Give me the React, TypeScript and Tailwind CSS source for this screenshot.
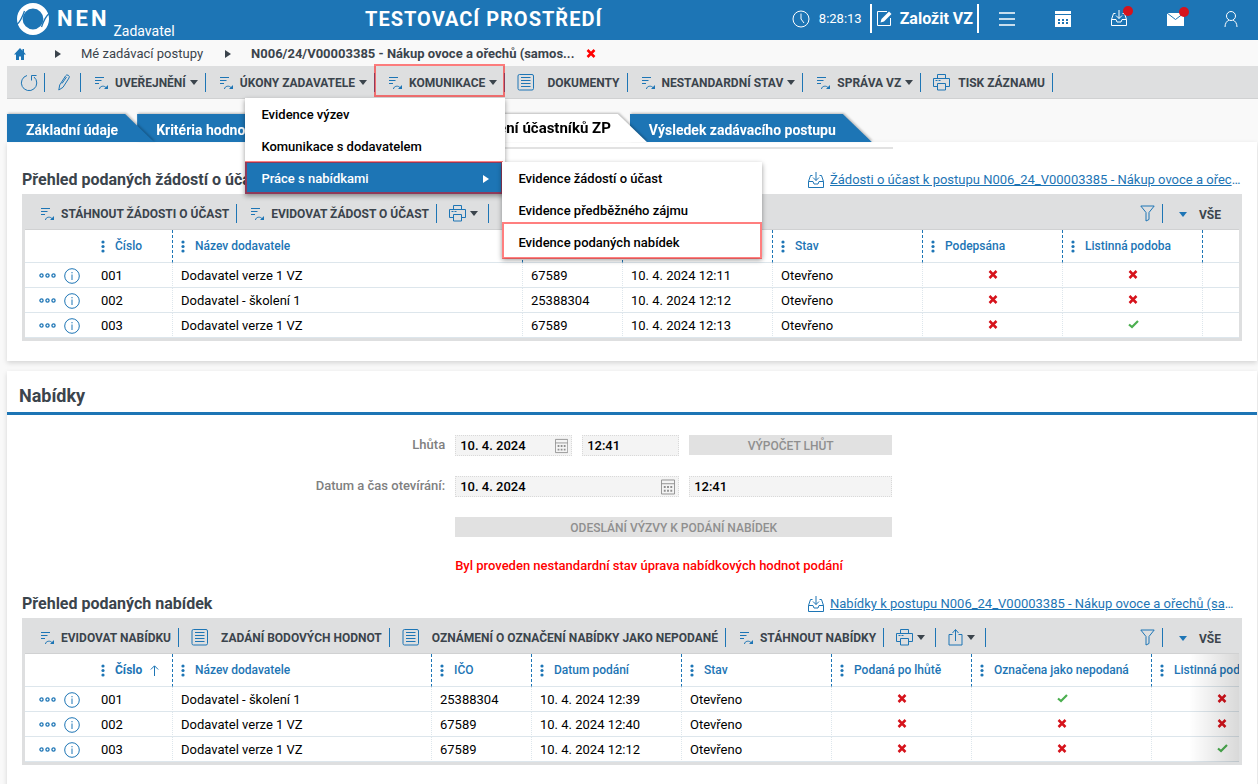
import type { ReactNode } from "react";
import clsx from "clsx";

interface IconProps {
  className?: string;
}

const LogoIcon = () => (
  <svg width="32" height="32" viewBox="0 0 32 32" fill="none">
    <circle cx="16" cy="16" r="13.200" stroke="#fff" strokeWidth="5.600" />
    <path d="M33 10C29 12 27 17 24.500 24" stroke="#1d75b5" strokeWidth="1.300" />
    <path d="M-1 22C3 20 5 15 7.500 8" stroke="#1d75b5" strokeWidth="1.300" />
  </svg>
);

const ClockIcon = () => (
  <svg width="18" height="18" viewBox="0 0 18 18" fill="none" stroke="#fff">
    <circle cx="9" cy="9" r="8" />
    <path d="M9 3.500V9l3 4" />
  </svg>
);

const ComposeIcon = () => (
  <svg width="17" height="17" viewBox="0 0 17 17" fill="none">
    <path d="M11 1.500H1.500v14h13V8" stroke="#fff" />
    <path d="M4.500 12.500l1-3.500 7.500-7.500 2.500 2.500L8 11.500z" fill="#fff" />
  </svg>
);

const CalendarSolidIcon = () => (
  <svg width="16" height="16" viewBox="0 0 16 16">
    <path d="M0 0h16v3H0zM0 4h16v12H0z" fill="#fff" />
    <path
      d="M3 8h2v2H3zM7 8h2v2H7zM11 8h2v2h-2zM3 11h2v2H3zM7 11h2v2H7zM11 11h2v2h-2z"
      fill="#1d75b5"
    />
  </svg>
);

const InboxIcon = ({ className }: IconProps) => (
  <svg
    width="17"
    height="17"
    viewBox="0 0 17 17"
    fill="none"
    stroke="currentColor"
    className={className}
  >
    <path d="M4.500 3.500H2.500L.5 9.500V15.500h15V9.500l-2-6h-2M.5 9.500h4.500l1 2.500h4l1-2.500h4.500" />
    <path d="M8 0v8.500M5 5.500l3 3 3-3" />
  </svg>
);

const MailIcon = () => (
  <svg width="17" height="14" viewBox="0 0 17 14">
    <path d="M0 1h17v13H0z" fill="#fff" />
    <path d="M0 1l8.500 6.500L17 1" fill="none" stroke="#1d75b5" />
  </svg>
);

const UserIcon = () => (
  <svg width="14" height="16" viewBox="0 0 14 16" fill="none" stroke="#fff">
    <circle cx="7" cy="5" r="4.500" />
    <path d="M1 16c0-4 2-6 4-7M13 16c0-4-2-6-4-7" />
  </svg>
);

const HomeIcon = () => (
  <svg width="12" height="12" viewBox="0 0 12 12" fill="#1d75b5">
    <path d="M6 0L0 6.500h2V12h3V8.500h2V12h3V6.500h2L10 4.300V1H8.500v1.700z" />
  </svg>
);

const RefreshIcon = () => (
  <svg width="18" height="18" viewBox="0 0 18 18" fill="none" stroke="#1d75b5">
    <path d="M7 1.500A7.700 7.700 0 1 0 14 3M11.500 6.500V1.500h5" />
  </svg>
);

const PencilIcon = () => (
  <svg width="12" height="17" viewBox="0 0 12 17" fill="none" stroke="#1d75b5">
    <path d="M.8 16l.9-5L7.500 2a2 2 0 0 1 3.500 2L5 13.300zM4 9.500L8.500 3" />
  </svg>
);

const ActionIcon = () => (
  <svg width="14" height="14" viewBox="0 0 14 14" fill="none" stroke="#1d75b5">
    <path d="M0 1.500h9M0 4.500h6.500M0 7.500h4M4.500 13c0-3 5-4 7-1" />
    <path d="M13 9v4h-4z" fill="#1d75b5" stroke="none" />
  </svg>
);

const DocumentIcon = () => (
  <svg width="18" height="17" viewBox="0 0 18 17" fill="none" stroke="#1d75b5">
    <rect x="1" y=".5" width="15.500" height="15.500" rx="1.500" />
    <path d="M4 3.500h9.500M4 6.500h9.500M4 9.500h9.500M4 12.500h9.500" />
  </svg>
);

const PrinterIcon = () => (
  <svg width="17" height="17" viewBox="0 0 17 17" fill="none" stroke="#1d75b5">
    <path d="M4.500 4.500v-4h8v4M4.500 12.500h-4v-8h16v8h-4M4.500 9.500h8v6.500h-8z" />
    <path d="M2.500 6.500h2M5.500 6.500h2" />
  </svg>
);

const ShareIcon = () => (
  <svg width="15" height="17" viewBox="0 0 15 17" fill="none" stroke="#1d75b5">
    <path d="M4.500 5.500H1v10.500h13V5.500h-3.500M7.500 12V1M4.500 4l3-3.500 3 3.500" />
  </svg>
);

const FilterIcon = () => (
  <svg width="15" height="17" viewBox="0 0 15 17" fill="none" stroke="#1d75b5">
    <path d="M.8 1h13.400L9 7.500v7l-3 1.500V7.500z" />
  </svg>
);

const CalendarIcon = () => (
  <svg width="15" height="16" viewBox="0 0 15 16" fill="none">
    <path d="M.5.5h14v15H.5zM.5 4.500h14" stroke="#8f8f8f" />
    <path
      d="M3 7h2v2H3zM6.500 7h2v2h-2zM10 7h2v2h-2zM3 11h2v2H3zM6.500 11h2v2h-2zM10 11h2v2h-2z"
      fill="#8f8f8f"
    />
  </svg>
);

const DotsIcon = () => (
  <svg
    width="17"
    height="5"
    viewBox="0 0 17 5"
    fill="none"
    stroke="#1d75b5"
    strokeWidth="1.300"
  >
    <circle cx="2.500" cy="2.500" r="1.600" />
    <circle cx="8.500" cy="2.500" r="1.600" />
    <circle cx="14.500" cy="2.500" r="1.600" />
  </svg>
);

const InfoIcon = () => (
  <svg width="16" height="16" viewBox="0 0 16 16" fill="none" stroke="#1d75b5">
    <circle cx="8" cy="8" r="7.300" />
    <path d="M8 6.500V12M8 4v1.300" />
  </svg>
);

const GripIcon = () => (
  <svg width="4" height="13" viewBox="0 0 4 13" fill="#1d75b5">
    <circle cx="2" cy="2" r="1.600" />
    <circle cx="2" cy="6.500" r="1.600" />
    <circle cx="2" cy="11" r="1.600" />
  </svg>
);

const SortIcon = () => (
  <svg width="9" height="11" viewBox="0 0 9 11" fill="none" stroke="#1d75b5">
    <path d="M4.500 11V1M.8 4.500l3.700-3.700 3.700 3.700" />
  </svg>
);

const CrossIcon = ({ className }: IconProps) => (
  <svg
    width="10"
    height="9"
    viewBox="0 0 10 9"
    fill="none"
    stroke="currentColor"
    strokeWidth="2.500"
    className={className}
  >
    <path d="M1.500 1l7 7M8.500 1l-7 7" />
  </svg>
);

const CheckIcon = () => (
  <svg width="11" height="9" viewBox="0 0 11 9" fill="none" className="inline">
    <path d="M1 4.500l3 2.500 6-6" stroke="#4caf50" strokeWidth="2.200" />
  </svg>
);

const Caret = ({ className }: IconProps) => (
  <svg
    width="8"
    height="5"
    viewBox="0 0 8 5"
    fill="currentColor"
    className={className}
  >
    <path d="M0 0h8L4 5z" />
  </svg>
);

const CaretRight = () => (
  <svg width="6" height="8" viewBox="0 0 6 8" fill="currentColor">
    <path d="M0 0l6 4-6 4z" />
  </svg>
);

const Separator = () => <span className="h-[19px] w-px shrink-0 bg-[#1d75b5]" />;

interface ToolButtonProps {
  label: string;
  icon?: "action" | "document" | "printer";
  caret?: boolean;
}

const ToolButton = ({ label, icon = "action", caret }: ToolButtonProps) => (
  <>
    <button
      type="button"
      className={clsx(
        "flex items-center pr-[7px] text-xs font-bold whitespace-nowrap text-[#3b444c]",
        icon === "action" ? "pl-[14px]" : "pl-3"
      )}
    >
      {icon === "action" && <ActionIcon />}
      {icon === "document" && <DocumentIcon />}
      {icon === "printer" && <PrinterIcon />}
      <span
        className={clsx(
          icon === "action" && "ml-[6px]",
          icon === "document" && "ml-3",
          icon === "printer" && "ml-2"
        )}
      >
        {label}
      </span>
      {caret && <Caret className="ml-1" />}
    </button>
    <Separator />
  </>
);

const IconMenuButton = ({
  label,
  children,
}: {
  label: string;
  children: ReactNode;
}) => (
  <>
    <button
      type="button"
      aria-label={label}
      className="flex items-center gap-1 pr-[10px] pl-3 text-[#3b444c]"
    >
      {children}
      <Caret />
    </button>
    <Separator />
  </>
);

const TopBar = () => (
  <header className="-mr-px flex h-10 items-center bg-[#1d75b5] text-white">
    <div className="flex w-[365px] shrink-0 items-center self-stretch pb-[3px] pl-[17px]">
      <LogoIcon />
      <span className="ml-2 text-[22px] font-bold tracking-[3px]">NEN</span>
      <span className="ml-1 self-end text-sm leading-3">Zadavatel</span>
    </div>
    <h1 className="pb-[3px] text-xl font-bold tracking-[1px] whitespace-nowrap">
      TESTOVACÍ PROSTŘEDÍ
    </h1>
    <div className="ml-auto flex shrink-0 items-center self-stretch pb-[3px]">
      <ClockIcon />
      <span className="mr-2 ml-[9px] text-[13px]">8:28:13</span>
      <button
        type="button"
        className="flex h-[29px] items-center gap-[7px] border-x-2 border-white px-1 text-base font-bold"
      >
        <ComposeIcon />
        Založit VZ
      </button>
      <button type="button" aria-label="Menu" className="grid w-14 place-items-center">
        <svg width="16" height="14" viewBox="0 0 16 14" stroke="#fff" strokeWidth="1.500">
          <path d="M0 1h16M0 7h16M0 13h16" />
        </svg>
      </button>
      <button type="button" aria-label="Kalendář" className="grid w-14 place-items-center">
        <CalendarSolidIcon />
      </button>
      <button type="button" aria-label="Doručené" className="relative grid w-14 place-items-center">
        <InboxIcon />
        <span className="absolute -top-1 right-[14px] size-[10px] rounded-full bg-[#d6131c]" />
      </button>
      <button type="button" aria-label="Zprávy" className="relative grid w-14 place-items-center">
        <MailIcon />
        <span className="absolute -top-[5px] right-[14px] size-[10px] rounded-full bg-[#d6131c]" />
      </button>
      <button type="button" aria-label="Uživatel" className="grid w-14 place-items-center">
        <UserIcon />
      </button>
    </div>
  </header>
);

const Breadcrumb = () => (
  <nav className="flex h-[26px] items-center pt-px pl-[14px] text-[13px] text-[#3b444c]">
    <a href="#" aria-label="Domů">
      <HomeIcon />
    </a>
    <span className="mr-5 ml-[29px]">
      <CaretRight />
    </span>
    <a href="#">Mé zadávací postupy</a>
    <span className="mr-5 ml-[22px]">
      <CaretRight />
    </span>
    <span className="font-bold">
      N006/24/V00003385 - Nákup ovoce a ořechů (samos...
    </span>
    <button type="button" aria-label="Zavřít" className="ml-3 text-[#ff0000]">
      <CrossIcon />
    </button>
  </nav>
);

const menuItem =
  "flex h-8 w-full items-center px-4 pt-[2px] text-[13px] font-medium whitespace-nowrap";

const CommunicationMenu = () => (
  <div className="absolute top-[31px] right-0 z-20 w-[260px] bg-white text-black shadow-[0_2px_5px_rgba(0,0,0,0.4)]">
    <button type="button" className={menuItem}>
      Evidence výzev
    </button>
    <button type="button" className={menuItem}>
      Komunikace s dodavatelem
    </button>
    <div className="relative">
      <button
        type="button"
        className={clsx(menuItem, "justify-between bg-[#1d75b5] text-white")}
      >
        Práce s nabídkami
        <CaretRight />
      </button>
      <span className="pointer-events-none absolute -top-px right-[2px] bottom-0 left-0 border-2 border-[#ff0000]/50" />
      <div className="absolute top-0 left-[257px] w-[260px] bg-white shadow-[0_2px_5px_rgba(0,0,0,0.4)]">
        <button type="button" className={menuItem}>
          Evidence žádostí o účast
        </button>
        <button type="button" className={menuItem}>
          Evidence předběžného zájmu
        </button>
        <div className="relative">
          <button type="button" className={menuItem}>
            Evidence podaných nabídek
          </button>
          <span className="pointer-events-none absolute inset-x-0 -top-1 -bottom-px border-2 border-[#ff0000]/50" />
        </div>
      </div>
    </div>
  </div>
);

const MainToolbar = () => (
  <div className="ml-[7px] flex h-[33px] items-center border-b border-[#d0d1d2] bg-[#dedfe0] pt-px">
    <button type="button" aria-label="Obnovit" className="pr-[6px] pl-[13px]">
      <RefreshIcon />
    </button>
    <Separator />
    <button type="button" aria-label="Upravit" className="pr-[10px] pl-[13px]">
      <PencilIcon />
    </button>
    <Separator />
    <ToolButton label="UVEŘEJNĚNÍ" caret />
    <ToolButton label="ÚKONY ZADAVATELE" caret />
    <div className="relative flex items-center self-stretch">
      <ToolButton label="KOMUNIKACE" caret />
      <span className="pointer-events-none absolute -top-[3px] right-0 bottom-px -left-px z-30 border-2 border-[#ff0000]/50" />
      <CommunicationMenu />
    </div>
    <ToolButton label="DOKUMENTY" icon="document" />
    <ToolButton label="NESTANDARDNÍ STAV" caret />
    <ToolButton label="SPRÁVA VZ" caret />
    <ToolButton label="TISK ZÁZNAMU" icon="printer" />
  </div>
);

interface TabProps {
  label: string;
  className?: string;
  active?: boolean;
}

const Tab = ({ label, className, active }: TabProps) => (
  <div
    className={clsx(
      "relative drop-shadow-[1px_-1px_1px_rgba(0,0,0,0.25)] not-first:-ml-[17px]",
      className
    )}
  >
    <button
      type="button"
      role="tab"
      aria-selected={Boolean(active)}
      className={clsx(
        "flex h-7 w-full items-center pr-9 pl-[19px] font-bold whitespace-nowrap [clip-path:polygon(0_0,calc(100%_-_29px)_0,100%_100%,0_100%)]",
        active
          ? "justify-end bg-white text-[15px] text-black"
          : "bg-[#1d75b5] pt-[3px] text-sm text-white"
      )}
    >
      {label}
    </button>
  </div>
);

const Tabs = () => (
  <div role="tablist" className="ml-[7px] flex pt-[15px]">
    <Tab label="Základní údaje" className="z-[4]" />
    <Tab label="Kritéria hodnocení" className="z-[3]" />
    <Tab label="Podání a hodnocení účastníků ZP" className="z-[3] w-[356px]" active />
    <Tab label="Výsledek zadávacího postupu" className="z-[2]" />
  </div>
);

interface Column {
  title: string;
  width: string;
  sorted?: boolean;
}

interface GridProps {
  columns: Column[];
  rows: (string | boolean)[][];
  filler?: boolean;
}

const Grid = ({ columns, rows, filler }: GridProps) => (
  <table
    className={clsx(
      "table-fixed border-separate border-spacing-0 bg-white text-left",
      filler ? "w-full" : "w-[1267px]"
    )}
  >
    <thead>
      <tr className="h-[33px]">
        <th className="w-[68px] border-b border-[#dde6ec]" aria-label="Akce" />
        {columns.map((column) => (
          <th
            key={column.title}
            className={clsx(
              "border-r border-b border-dashed border-r-[#1d75b5] border-b-[#dde6ec] p-0 pl-2 text-xs font-medium text-[#1d75b5] [border-bottom-style:solid]",
              column.width
            )}
          >
            <span className="flex items-center whitespace-nowrap">
              <GripIcon />
              <span className={clsx("ml-[10px]", column.sorted && "mr-2 font-bold")}>
                {column.title}
              </span>
              {column.sorted && <SortIcon />}
            </span>
          </th>
        ))}
        {filler && <th className="border-b border-[#dde6ec]" aria-hidden="true" />}
      </tr>
    </thead>
    <tbody>
      {rows.map((row) => (
        <tr key={String(row[0])} className="h-[25px]">
          <td className="border-b border-[#dde6ec] p-0 pt-px pl-[14px]">
            <span className="flex items-center gap-2">
              <button type="button" aria-label="Další akce">
                <DotsIcon />
              </button>
              <button type="button" aria-label="Detail">
                <InfoIcon />
              </button>
            </span>
          </td>
          {row.map((value, index) => (
            <td
              key={columns[index].title}
              className={clsx(
                "border-r border-b border-dotted border-[#dde6ec] p-0 text-[13px] leading-4 whitespace-nowrap text-black [border-bottom-style:solid]",
                typeof value === "boolean" ? "pb-[2px] pl-px text-center" : "pt-[2px] pl-2"
              )}
            >
              {value === true && <CheckIcon />}
              {value === false && <CrossIcon className="inline text-[#d6131c]" />}
              {typeof value === "string" && value}
            </td>
          ))}
          {filler && <td className="border-b border-[#dde6ec]" />}
        </tr>
      ))}
    </tbody>
  </table>
);

interface GridPanelProps {
  title: string;
  link: string;
  toolbar: ReactNode;
  children: ReactNode;
}

const GridPanel = ({ title, link, toolbar, children }: GridPanelProps) => (
  <div className="mr-[15px] ml-[15px]">
    <div className="flex h-[30px] items-center justify-between pt-[2px]">
      <h3 className="text-base font-bold whitespace-nowrap text-[#3b444c]">{title}</h3>
      <div className="flex w-[434px] items-center gap-1 text-[13px] whitespace-nowrap text-[#1d75b5]">
        <InboxIcon className="mr-[1px] shrink-0" />
        <span>
          <a href="#" className="underline">
            {link}
          </a>
          …
        </span>
      </div>
    </div>
    <div className="bg-[#dedfe0] px-[3px] pb-[3px]">
      <div className="flex h-9 items-center border-b border-[#d0d1d2] pt-1 pl-[2px]">
        {toolbar}
        <button type="button" aria-label="Filtr" className="mr-[7px] ml-auto">
          <FilterIcon />
        </button>
        <Separator />
        <button
          type="button"
          className="flex items-center pt-[2px] pr-[18px] pl-4 text-xs font-bold text-[#3b444c]"
        >
          <Caret className="mr-3 text-[#1d75b5]" />
          VŠE
        </button>
      </div>
      <div className="relative overflow-hidden">{children}</div>
    </div>
  </div>
);

const requestColumns: Column[] = [
  { title: "Číslo", width: "w-[80px]" },
  { title: "Název dodavatele", width: "w-[350px]" },
  { title: "IČO", width: "w-[100px]" },
  { title: "Datum podání", width: "w-[150px]" },
  { title: "Stav", width: "w-[150px]" },
  { title: "Podepsána", width: "w-[140px]" },
  { title: "Listinná podoba", width: "w-[140px]" },
];

const requestRows = [
  ["001", "Dodavatel verze 1 VZ", "67589", "10. 4. 2024 12:11", "Otevřeno", false, false],
  ["002", "Dodavatel - školení 1", "25388304", "10. 4. 2024 12:12", "Otevřeno", false, false],
  ["003", "Dodavatel verze 1 VZ", "67589", "10. 4. 2024 12:13", "Otevřeno", false, true],
];

const offerColumns: Column[] = [
  { title: "Číslo", width: "w-[80px]", sorted: true },
  { title: "Název dodavatele", width: "w-[259px]" },
  { title: "IČO", width: "w-[100px]" },
  { title: "Datum podání", width: "w-[150px]" },
  { title: "Stav", width: "w-[150px]" },
  { title: "Podaná po lhůtě", width: "w-[140px]" },
  { title: "Označena jako nepodaná", width: "w-[180px]" },
  { title: "Listinná podoba", width: "w-[140px]" },
];

const offerRows = [
  ["001", "Dodavatel - školení 1", "25388304", "10. 4. 2024 12:39", "Otevřeno", false, true, false],
  ["002", "Dodavatel verze 1 VZ", "67589", "10. 4. 2024 12:40", "Otevřeno", false, false, false],
  ["003", "Dodavatel verze 1 VZ", "67589", "10. 4. 2024 12:12", "Otevřeno", false, false, true],
];

interface FieldProps {
  id: string;
  value: string;
  label?: string;
  calendar?: boolean;
}

const Field = ({ id, value, label, calendar }: FieldProps) => (
  <div className="flex h-[21px] items-center border border-dotted border-[#d9d9d9] bg-[#f4f4f4] pr-[3px]">
    <input
      id={id}
      aria-label={label}
      defaultValue={value}
      readOnly
      className="w-full min-w-0 bg-transparent pl-1 text-[13px] leading-4 font-medium text-black"
    />
    {calendar && <CalendarIcon />}
  </div>
);

const formButton = "h-5 w-full bg-[#e1e1e1] pt-px text-xs font-medium text-[#8f8f8f]";

const OfferForm = () => (
  <form className="grid grid-cols-[35%_35%] gap-x-[10px] gap-y-5 pt-5 pl-px">
    <label
      htmlFor="deadline"
      className="text-right text-[13px] leading-5 font-medium text-[#808080]"
    >
      Lhůta
    </label>
    <div className="grid grid-cols-[117px_97px_1fr] gap-[10px]">
      <Field id="deadline" value="10. 4. 2024" calendar />
      <Field id="deadline-time" label="Lhůta – čas" value="12:41" />
      <button type="button" className={formButton} disabled>
        VÝPOČET LHŮT
      </button>
    </div>
    <label
      htmlFor="opening"
      className="text-right text-[13px] leading-5 font-medium text-[#808080]"
    >
      Datum a čas otevírání:
    </label>
    <div className="grid grid-cols-[224px_1fr] gap-[10px]">
      <Field id="opening" value="10. 4. 2024" calendar />
      <Field id="opening-time" label="Čas otevírání" value="12:41" />
    </div>
    <button type="button" className={clsx(formButton, "col-start-2")} disabled>
      ODESLÁNÍ VÝZVY K PODÁNÍ NABÍDEK
    </button>
    <p className="col-start-2 text-[13px] leading-[18px] font-medium whitespace-nowrap text-[#ff0000]">
      Byl proveden nestandardní stav úprava nabídkových hodnot podání
    </p>
  </form>
);

const App = () => {
  return (
    <div className="min-h-screen overflow-hidden bg-[#f9f9f9] font-['Roboto','Liberation_Sans',sans-serif]">
      <TopBar />
      <Breadcrumb />
      <MainToolbar />
      <Tabs />

      <section className="mr-px ml-[7px] bg-white pb-5 shadow-[0_2px_5px_rgba(0,0,0,0.15)]">
        <div className="flex pt-[5px] pb-[15px] pl-[260px]">
          <span className="h-[2px] w-[626px] bg-[#e2e2e2]" />
        </div>
        <GridPanel
          title="Přehled podaných žádostí o účast"
          link="Žádosti o účast k postupu N006_24_V00003385 - Nákup ovoce a ořec"
          toolbar={
            <>
              <ToolButton label="STÁHNOUT ŽÁDOSTI O ÚČAST" />
              <ToolButton label="EVIDOVAT ŽÁDOST O ÚČAST" />
              <IconMenuButton label="Tisk">
                <PrinterIcon />
              </IconMenuButton>
            </>
          }
        >
          <Grid columns={requestColumns} rows={requestRows} filler />
        </GridPanel>
      </section>

      <section className="mt-[10px] mr-px ml-[7px] bg-white pb-8 shadow-[0_2px_5px_rgba(0,0,0,0.15)]">
        <h2 className="flex h-11 items-center border-b-3 border-[#1d75b5] pt-2 pl-3 text-lg font-bold text-[#3b444c]">
          Nabídky
        </h2>
        <OfferForm />
        <div className="pt-[13px]">
          <GridPanel
            title="Přehled podaných nabídek"
            link="Nabídky k postupu N006_24_V00003385 - Nákup ovoce a ořechů (sa"
            toolbar={
              <>
                <ToolButton label="EVIDOVAT NABÍDKU" />
                <ToolButton label="ZADÁNÍ BODOVÝCH HODNOT" icon="document" />
                <ToolButton label="OZNÁMENÍ O OZNAČENÍ NABÍDKY JAKO NEPODANÉ" icon="document" />
                <ToolButton label="STÁHNOUT NABÍDKY" />
                <IconMenuButton label="Tisk">
                  <PrinterIcon />
                </IconMenuButton>
                <IconMenuButton label="Export">
                  <ShareIcon />
                </IconMenuButton>
              </>
            }
          >
            <Grid columns={offerColumns} rows={offerRows} />
            <span className="pointer-events-none absolute inset-y-0 right-0 w-[50px] bg-linear-to-r from-transparent to-black/15" />
          </GridPanel>
        </div>
      </section>
    </div>
  );
};

export default App;
